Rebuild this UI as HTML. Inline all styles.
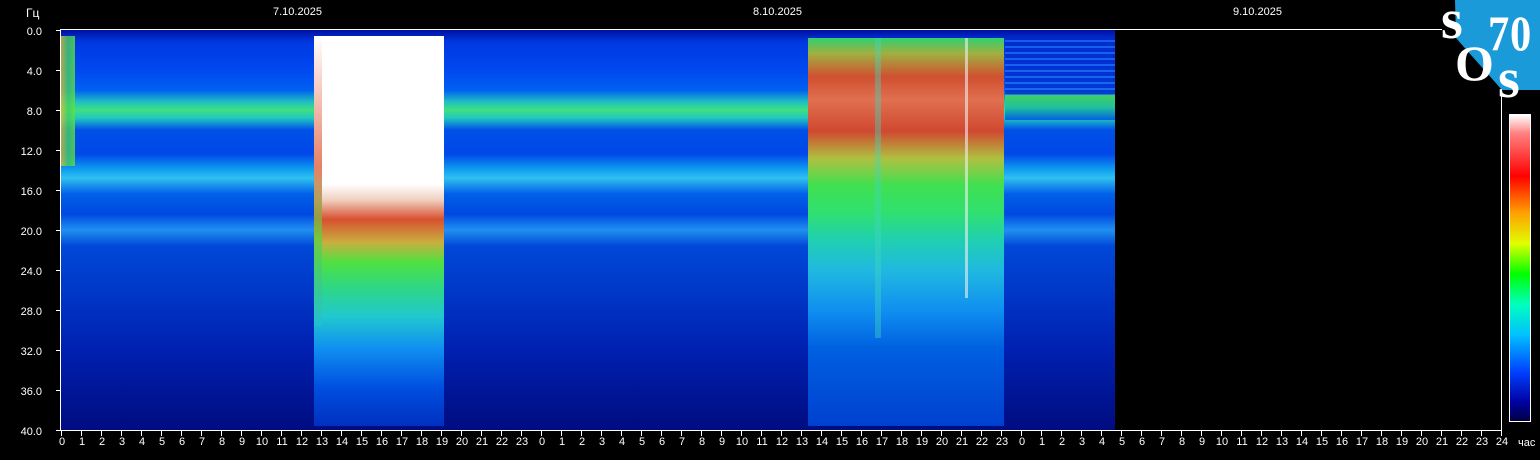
<!DOCTYPE html><html><head><meta charset="utf-8"><style>
body{margin:0;width:1540px;height:460px;background:#000;position:relative;overflow:hidden;font-family:"Liberation Sans",sans-serif;color:#fff;font-size:11px}
.a{position:absolute}
.yl{position:absolute;right:1498px;width:40px;text-align:right}
.h{position:absolute;top:436px;width:16px;margin-left:-8px;text-align:center}
</style></head><body>
<div class="a" style="left:26px;top:6px;font-size:12px">Гц</div>
<div class="a" style="left:273px;top:6px">7.10.2025</div>
<div class="a" style="left:753px;top:6px">8.10.2025</div>
<div class="a" style="left:1233px;top:6px">9.10.2025</div>
<!-- base spectrogram -->
<div class="a" style="left:61px;top:30px;width:1054px;height:400px;background:linear-gradient(#0010a0 0%,#0038e0 3%,#0048f0 10%,#0060f0 15%,#20c0c0 18%,#40e080 20%,#20c8c0 22%,#0050e8 25%,#0048e8 31%,#10a0f0 35%,#30c0f0 37%,#0060e8 41%,#0048e0 46%,#2090f0 50%,#0048d8 54%,#0038c8 65%,#0020b0 80%,#000c80 100%)"></div>
<div class="a" style="left:61px;top:36px;width:14px;height:130px;background:linear-gradient(90deg,#e0c030,#40d060,#60e040);opacity:.8"></div>
<div class="a" style="left:1005px;top:36px;width:110px;height:70px;background:repeating-linear-gradient(#0028c8 0 4px,#2070f0 4px 6px);opacity:.7"></div>
<div class="a" style="left:1005px;top:95px;width:110px;height:25px;background:linear-gradient(#40d060,#20c0a0,#0060e0)"></div>
<!-- burst 1 -->
<div class="a" style="left:314px;top:36px;width:130px;height:390px;background:linear-gradient(#fff 0%,#fff 38%,#f0d0c0 42%,#d85030 47%,#c8b040 53%,#50e040 58%,#30d880 64%,#20c8d0 72%,#1090f0 80%,#0050e0 90%,#0030c0 100%)"></div>
<div class="a" style="left:314px;top:36px;width:8px;height:290px;background:linear-gradient(#fff,#e06040 45%,#60d040 70%,#20c0d0);opacity:.8"></div>
<!-- burst 2 -->
<div class="a" style="left:808px;top:38px;width:196px;height:388px;background:linear-gradient(#30d070 0%,#a0b040 4%,#d05030 10%,#e07050 16%,#d04830 24%,#b0c040 31%,#40e050 38%,#30e070 45%,#20d0b0 52%,#20b8e0 60%,#1090f0 70%,#0060e0 80%,#0040d0 100%)"></div>
<div class="a" style="left:875px;top:38px;width:6px;height:300px;background:#40d8c0;opacity:.4"></div>
<div class="a" style="left:965px;top:38px;width:3px;height:260px;background:#f0f0f0;opacity:.6"></div>
<!-- axes -->
<div class="a" style="left:60px;top:29px;width:1382px;height:1px;background:#fff"></div>
<div class="a" style="left:60px;top:29px;width:1px;height:402px;background:#fff"></div>
<div class="a" style="left:60px;top:430px;width:1442px;height:1px;background:#fff"></div>
<div class="a" style="left:1501px;top:86px;width:1px;height:345px;background:#fff"></div>
<!-- logo -->
<svg class="a" style="left:1440px;top:0" width="100" height="100"><polygon points="15,0 100,0 100,90 62,90 16,38" fill="#1a9ad8"/>
<text x="1" y="38" font-family="Liberation Serif" font-weight="bold" font-size="56" fill="#fff">s</text>
<text x="48" y="50" font-family="Liberation Serif" font-weight="bold" font-size="50" fill="#fff" transform="scale(0.85,1)" transform-origin="48 50">7</text>
<text x="70" y="50" font-family="Liberation Serif" font-weight="bold" font-size="50" fill="#fff" transform="scale(0.85,1)" transform-origin="70 50">0</text>
<text x="15" y="80" font-family="Liberation Serif" font-weight="bold" font-size="50" fill="#fff">O</text>
<text x="58" y="97" font-family="Liberation Serif" font-weight="bold" font-size="56" fill="#fff">s</text></svg>
<!-- colorbar -->
<div class="a" style="left:1509px;top:114px;width:22px;height:308px;border:1px solid #fff;box-sizing:border-box;background:linear-gradient(#fff 0%,#ff8080 6%,#ff0000 20%,#ffa000 32%,#e0ff00 42%,#00ff00 52%,#00ffc0 62%,#00c0ff 72%,#0040ff 84%,#0000a0 94%,#000040 100%)"></div>
<!-- y labels -->
<div class="yl" style="top:26px">0.0</div><div class="yl" style="top:66px">4.0</div><div class="yl" style="top:106px">8.0</div><div class="yl" style="top:146px">12.0</div><div class="yl" style="top:186px">16.0</div><div class="yl" style="top:226px">20.0</div><div class="yl" style="top:266px">24.0</div><div class="yl" style="top:306px">28.0</div><div class="yl" style="top:346px">32.0</div><div class="yl" style="top:386px">36.0</div><div class="yl" style="top:426px">40.0</div>
<div class="a" style="left:56px;top:30px;width:4px;height:401px;background:repeating-linear-gradient(#fff 0 1px,transparent 1px 40px)"></div>
<div class="a" style="left:61px;top:431px;width:1441px;height:5px;background:repeating-linear-gradient(90deg,#fff 0 1px,transparent 1px 20px)"></div>
<div class="a" style="left:1518px;top:437px">час</div>
<div class="h" style="left:62px">0</div><div class="h" style="left:82px">1</div><div class="h" style="left:102px">2</div><div class="h" style="left:122px">3</div><div class="h" style="left:142px">4</div><div class="h" style="left:162px">5</div><div class="h" style="left:182px">6</div><div class="h" style="left:202px">7</div><div class="h" style="left:222px">8</div><div class="h" style="left:242px">9</div><div class="h" style="left:262px">10</div><div class="h" style="left:282px">11</div><div class="h" style="left:302px">12</div><div class="h" style="left:322px">13</div><div class="h" style="left:342px">14</div><div class="h" style="left:362px">15</div><div class="h" style="left:382px">16</div><div class="h" style="left:402px">17</div><div class="h" style="left:422px">18</div><div class="h" style="left:442px">19</div><div class="h" style="left:462px">20</div><div class="h" style="left:482px">21</div><div class="h" style="left:502px">22</div><div class="h" style="left:522px">23</div>
<div class="h" style="left:542px">0</div><div class="h" style="left:562px">1</div><div class="h" style="left:582px">2</div><div class="h" style="left:602px">3</div><div class="h" style="left:622px">4</div><div class="h" style="left:642px">5</div><div class="h" style="left:662px">6</div><div class="h" style="left:682px">7</div><div class="h" style="left:702px">8</div><div class="h" style="left:722px">9</div><div class="h" style="left:742px">10</div><div class="h" style="left:762px">11</div><div class="h" style="left:782px">12</div><div class="h" style="left:802px">13</div><div class="h" style="left:822px">14</div><div class="h" style="left:842px">15</div><div class="h" style="left:862px">16</div><div class="h" style="left:882px">17</div><div class="h" style="left:902px">18</div><div class="h" style="left:922px">19</div><div class="h" style="left:942px">20</div><div class="h" style="left:962px">21</div><div class="h" style="left:982px">22</div><div class="h" style="left:1002px">23</div>
<div class="h" style="left:1022px">0</div><div class="h" style="left:1042px">1</div><div class="h" style="left:1062px">2</div><div class="h" style="left:1082px">3</div><div class="h" style="left:1102px">4</div><div class="h" style="left:1122px">5</div><div class="h" style="left:1142px">6</div><div class="h" style="left:1162px">7</div><div class="h" style="left:1182px">8</div><div class="h" style="left:1202px">9</div><div class="h" style="left:1222px">10</div><div class="h" style="left:1242px">11</div><div class="h" style="left:1262px">12</div><div class="h" style="left:1282px">13</div><div class="h" style="left:1302px">14</div><div class="h" style="left:1322px">15</div><div class="h" style="left:1342px">16</div><div class="h" style="left:1362px">17</div><div class="h" style="left:1382px">18</div><div class="h" style="left:1402px">19</div><div class="h" style="left:1422px">20</div><div class="h" style="left:1442px">21</div><div class="h" style="left:1462px">22</div><div class="h" style="left:1482px">23</div><div class="h" style="left:1502px">24</div>
</body></html>
